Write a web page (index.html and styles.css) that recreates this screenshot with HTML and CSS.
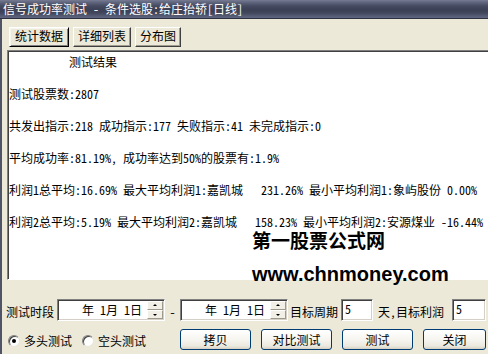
FILE: index.html
```html
<!DOCTYPE html>
<html>
<head>
<meta charset="utf-8">
<link rel="stylesheet" href="styles.css">
</head>
<body>
<div class="window">
  <div class="titlebar">信号成功率测试 - 条件选股:给庄抬轿[日线]</div>
  <div class="client">
    <div class="tabs">
      <div class="tab tab-active tab-w1">统计数据</div>
      <div class="tab tab-w2">详细列表</div>
      <div class="tab tab-w3">分布图</div>
    </div>
    <div class="result"><pre class="result-text">          测试结果

测试股票数:2807

共发出指示:218 成功指示:177 失败指示:41 未完成指示:0

平均成功率:81.19%, 成功率达到50%的股票有:1.9%

利润1总平均:16.69% 最大平均利润1:嘉凯城   231.26% 最小平均利润1:象屿股份 0.00%

利润2总平均:5.19% 最大平均利润2:嘉凯城   158.23% 最小平均利润2:安源煤业 -16.44%</pre></div>
    <div class="row row-params">
      <span class="label">测试时段</span>
      <div class="field date date-first">
        <span class="date-text">年 1月 1日</span>
        <div class="spin"><span class="spin-up"></span><span class="spin-down"></span></div>
      </div>
      <span class="dash">-</span>
      <div class="field date">
        <span class="date-text">年 1月 1日</span>
        <div class="spin"><span class="spin-up"></span><span class="spin-down"></span></div>
      </div>
      <span class="label label-period">目标周期</span>
      <div class="field num num-period">5</div>
      <span class="label label-profit">天,目标利润</span>
      <div class="field num num-profit">5</div>
    </div>
    <div class="row row-actions">
      <span class="radio radio-on"></span><span class="radio-label">多头测试</span>
      <span class="radio radio-second"></span><span class="radio-label">空头测试</span>
      <button class="btn btn-first">拷贝</button>
      <button class="btn">对比测试</button>
      <button class="btn">测试</button>
      <button class="btn btn-last">关闭</button>
    </div>
  </div>
  <div class="watermark">
    <div class="wm-cn">第一股票公式网</div>
    <div class="wm-url">www.chnmoney.com</div>
  </div>
</div>
</body>
</html>
```
FILE: styles.css
```css
html, body {
  margin: 0;
  padding: 0;
}
body {
  width: 488px;
  height: 354px;
  overflow: hidden;
  background: #ece9d8;
  font-family: "Noto Sans Mono CJK SC", "Noto Sans CJK SC", monospace;
  font-size: 12px;
  line-height: 16px;
  color: #000;
}
.window {
  position: relative;
  width: 488px;
  height: 354px;
  overflow: hidden;
}
.titlebar {
  height: 18px;
  line-height: 18px;
  padding-left: 3px;
  color: #fff;
  white-space: pre;
  border-bottom: 1px solid #2c3040;
  background: linear-gradient(to bottom, #767b93 0px, #5a6078 3px, #454a60 6px, #3b4055 10px, #42475d 13px, #555b74 16px, #5f6580 18px);
}
.client {
  height: 335px;
  border-left: 2px solid #4f5466;
  box-sizing: border-box;
  overflow: hidden;
}
.tabs {
  display: flex;
  gap: 4px;
  padding: 8px 0 0 7px;
  height: 20px;
}
.tab {
  box-sizing: border-box;
  height: 20px;
  line-height: 16px;
  text-align: center;
  background: #ece9d8;
  border: 1px solid;
  border-color: #fff #404040 #404040 #fff;
  box-shadow: inset -1px -1px #a09d90;
}
.tab-active {
  border-color: #fff #000 #000 #fff;
  box-shadow: inset 1px 1px #f5f4ee, inset -1px -1px #808080;
}
.tab-w1 { width: 60px; }
.tab-w2 { width: 58px; }
.tab-w3 { width: 46px; }
.result {
  margin: 3px 0 0 5px;
  width: 520px;
  height: 230px;
  box-sizing: border-box;
  background: #fff;
  border: 1px solid;
  border-color: #808080 #fff #fff #808080;
  box-shadow: inset 1px 1px #404040;
  padding: 3px 0 0 1px;
}
.result-text {
  margin: 0;
  font: inherit;
  white-space: pre;
}
.row {
  display: flex;
  align-items: center;
  white-space: nowrap;
}
.row > * {
  flex-shrink: 0;
}
.row-params {
  margin-top: 19px;
  height: 22px;
  padding-left: 4px;
}
.label {
  white-space: pre;
  padding-top: 3px;
}
.field {
  box-sizing: border-box;
  height: 22px;
  background: #fff;
  border: 1px solid;
  border-color: #808080 #fff #fff #808080;
  box-shadow: inset 1px 1px #404040, inset -1px -1px #d4d0c8;
}
.date {
  width: 108px;
  display: flex;
  align-items: center;
}
.date-first {
  margin-left: 3px;
}
.date-text {
  padding-left: 24px;
  white-space: pre;
}
.spin {
  margin-left: auto;
  margin-right: 1px;
  width: 16px;
  height: 18px;
  display: flex;
  flex-direction: column;
}
.spin-up, .spin-down {
  flex: 1;
  position: relative;
  background: #f1efe6;
  border: 1px solid;
  border-color: #fff #9d9a8c #9d9a8c #fff;
}
.spin-up::after, .spin-down::after {
  content: "";
  position: absolute;
  left: 5px;
  width: 0;
  height: 0;
  border-left: 2px solid transparent;
  border-right: 2px solid transparent;
}
.spin-up::after {
  top: 2px;
  border-bottom: 2px solid #000;
}
.spin-down::after {
  top: 3px;
  border-top: 2px solid #000;
}
.dash {
  width: 15px;
  text-align: center;
  padding-top: 3px;
}
.label-period { margin-left: 2px; }
.num {
  padding: 1px 0 0 3px;
}
.num-period {
  margin-left: 3px;
  width: 32px;
}
.label-profit { margin-left: 5px; }
.num-profit {
  margin-left: 8px;
  width: 34px;
}
.row-actions {
  margin-top: 8px;
  height: 21px;
  padding-left: 6px;
}
.radio {
  box-sizing: border-box;
  width: 12px;
  height: 12px;
  border-radius: 50%;
  background: #fff;
  border: 1px solid;
  border-color: #808080 #e8e6dc #e8e6dc #808080;
  box-shadow: inset 1px 1px #404040;
  position: relative;
  margin-top: 3px;
}
.radio-on::after {
  content: "";
  position: absolute;
  left: 3px;
  top: 3px;
  width: 4px;
  height: 4px;
  border-radius: 50%;
  background: #000;
}
.radio-second {
  margin-left: 10px;
}
.radio-label {
  margin-left: 4px;
  padding-top: 3px;
}
.btn {
  box-sizing: border-box;
  width: 71px;
  height: 21px;
  margin-left: 10px;
  padding: 0;
  font: inherit;
  color: #000;
  border: 1px solid #003c74;
  border-radius: 3px;
  background: linear-gradient(to bottom, #ffffff 0%, #f6f5f0 50%, #ebe8de 85%, #d6d0c2 100%);
}
.btn-first {
  margin-left: 34px;
}
.btn-last {
  width: 63px;
}
.watermark {
  position: absolute;
  left: 252px;
  top: 230px;
  color: #000;
}
.wm-cn {
  font-family: "Noto Sans CJK SC", sans-serif;
  font-weight: 700;
  font-size: 19px;
  line-height: 19px;
}
.wm-url {
  margin-top: 15px;
  font-family: "Liberation Sans", sans-serif;
  font-weight: 700;
  font-size: 20px;
  line-height: 20px;
}
```
